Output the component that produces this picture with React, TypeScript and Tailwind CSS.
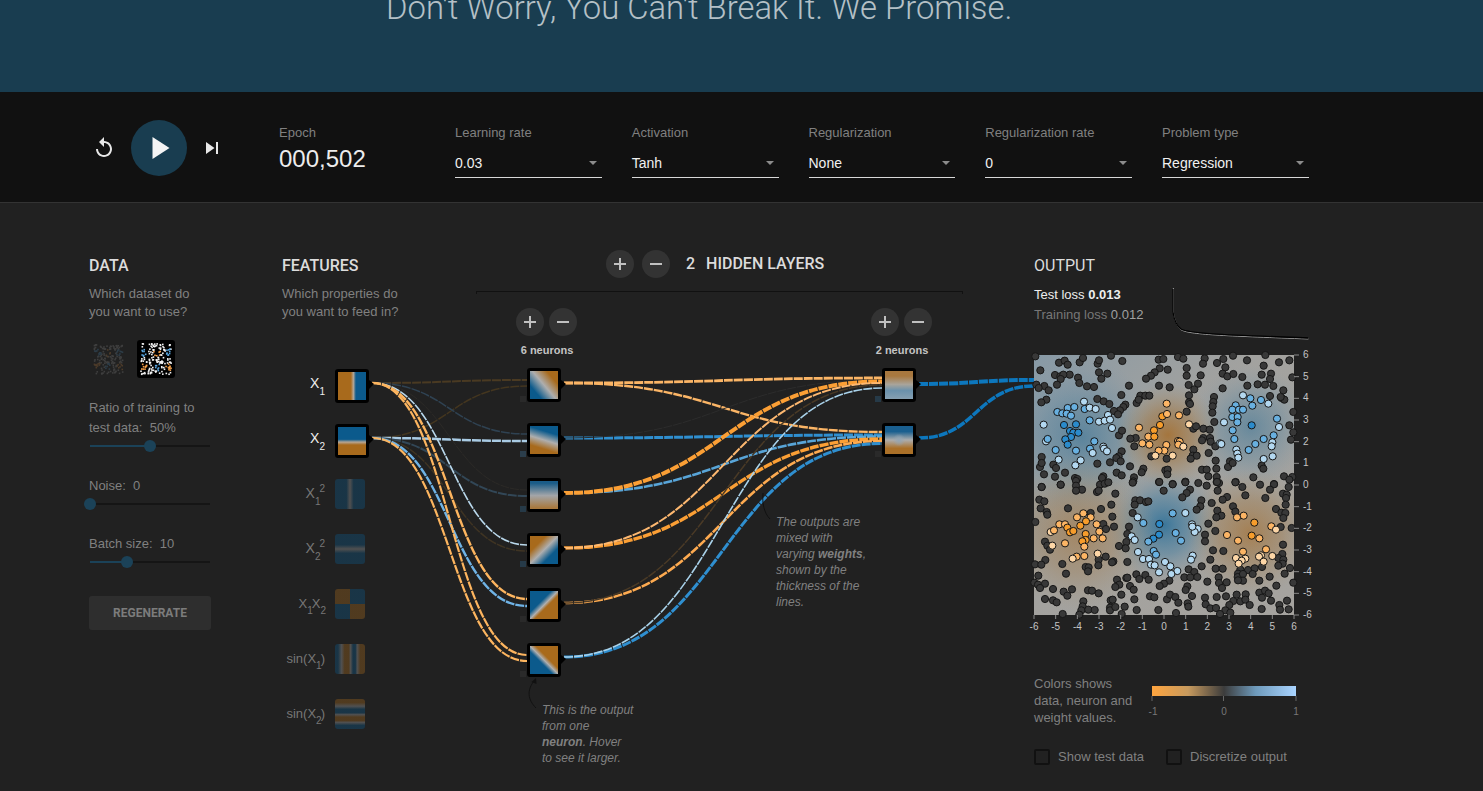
import React from "react";

const BLUE = "#2f8fd0";
const link = (x1: number, y1: number, x2: number, y2: number) => {
  const m = (x1 + x2) / 2;
  return `M${x1} ${y1}C${m} ${y1} ${m} ${y2} ${x2} ${y2}`;
};

type L = [number, number, number, number, string, number];
const X1 = 383, X2 = 438;
const LINKS: L[] = [
  [372, X1, 527, 380, "#4a3a22", 2],
  [372, X2, 527, 386, "#44361f", 1.5],
  [372, X1, 527, 434, "#2f4252", 1.5],
  [372, X2, 527, 441, "#a9cbe4", 2.5],
  [372, X1, 527, 490, "#2c2a27", 1],
  [372, X2, 527, 496, "#324757", 2],
  [372, X1, 527, 545, "#b9d8ec", 1.6],
  [372, X2, 527, 551, "#3f3423", 1.5],
  [372, X1, 527, 599, "#fdb55f", 2.4],
  [372, X2, 527, 606, "#6fb3e6", 2.4],
  [372, X1, 527, 655, "#fdb55f", 2.2],
  [372, X2, 527, 661, "#fdb55f", 2.2],
  [564, 383, 882, 432, "#fbb566", 2.4],
  [564, 438, 882, 435, BLUE, 3],
  [564, 493, 882, 436.5, "#58a5d8", 2.6],
  [564, 548, 882, 439, "#fb9f35", 3.4],
  [564, 603, 882, 441, "#fdaa50", 2.6],
  [564, 657, 882, 443.5, BLUE, 3],
  [564, 383, 882, 378, "#fbb566", 2.8],
  [564, 438, 882, 380, "#2c2c2c", 1],
  [564, 493, 882, 381.5, "#fb9f35", 4],
  [564, 548, 882, 383, "#fdb870", 2],
  [564, 603, 882, 385, "#4a3a26", 1.5],
  [564, 657, 882, 388, "#a9d2ea", 1.6],
  [919, 384, 1034, 380, "#0d77bd", 4],
  [919, 438, 1034, 386, "#0d77bd", 3.5],
];
const DIAMONDS: [number, number][] = [
  [369, 385], [369, 440], [561, 385], [561, 440], [561, 495], [561, 550], [561, 605], [561, 660], [916, 385], [916, 440],
];

function Network() {
  return (
    <svg className="absolute inset-0 pointer-events-none" width="1483" height="588" viewBox="0 203 1483 588" fill="none">
      {LINKS.map((l, i) => (
        <path key={i} d={link(l[0], l[1], l[2], l[3])} stroke={l[4]} strokeWidth={l[5]} strokeDasharray="9 1" />
      ))}
      {DIAMONDS.map(([x, y], i) => (
        <polygon key={i} points={`${x},${y - 5} ${x + 5},${y - 1} ${x},${y + 4}`} fill="#000" />
      ))}
      <path d="M536 708C528 700 526 690 535 680" stroke="#111" strokeWidth="1" />
      <path d="M531.5 682L536 678L536.5 684Z" fill="#111" />
      <path d="M770 519C764 513 762 503 763 493" stroke="#111" strokeWidth="1" />
      <path d="M476.5 291v3M962.5 291v3" stroke="#111" strokeWidth="1" />
    </svg>
  );
}

function HiddenNode({ bg, chip }: { bg: string; chip: string }) {
  return (
    <div className="relative w-[34px] h-[34px] ml-[11px] mb-[21px] rounded-[3px] border-[3px] border-black overflow-visible">
      <div className={"w-full h-full " + bg} />
      <div className={"absolute -left-[10px] top-[25px] w-[6px] h-[6px] " + chip} />
    </div>
  );
}

function RoundBtn({ minus }: { minus?: boolean }) {
  return (
    <button className="w-[28px] h-[28px] rounded-full bg-[#333333] flex items-center justify-center">
      <svg width="12" height="12" viewBox="0 0 12 12" fill="none" stroke="#c0c0c0" strokeWidth="2">
        <path d="M0 6H12" />
        {!minus && <path d="M6 0V12" />}
      </svg>
    </button>
  );
}

function Layer({ label, children }: { label: string; children: React.ReactNode }) {
  return (
    <div className="w-[62px] flex flex-col">
      <div className="flex gap-[5px]">
        <RoundBtn />
        <RoundBtn minus />
      </div>
      <div className="mt-[6px] mb-[10px] h-[16px] leading-[16px] text-center text-[11px] font-bold text-[#c4c4c4] whitespace-nowrap">{label}</div>
      {children}
    </div>
  );
}

function Select({ label, value }: { label: string; value: string }) {
  return (
    <div className="w-[146.75px] pt-[32px]">
      <div className="text-[13px] leading-[16px] text-[#808080]">{label}</div>
      <div className="mt-[14px] pb-[6px] border-b border-[#d8d8d8] flex items-center justify-between pr-[5px] h-[23px]">
        <span className="text-[14px] leading-[16px] text-[#f0f0f0]">{value}</span>
        <span className="w-0 h-0 border-l-[4px] border-r-[4px] border-t-[4px] border-l-transparent border-r-transparent border-t-[#8c8c8c]" />
      </div>
    </div>
  );
}

function Slider({ fill, thumb }: { fill: string; thumb: string }) {
  return (
    <div className="relative h-[2px] w-[120px] ml-[1px] bg-[#151515]">
      <div className={"h-full bg-[#1b4258] " + fill} />
      <div className={"absolute -top-[5px] w-[12px] h-[12px] rounded-full bg-[#1b4258] " + thumb} />
    </div>
  );
}

function rng(seed: number) {
  let s = seed;
  return () => {
    s = (s * 1664525 + 1013904223) % 4294967296;
    return s / 4294967296;
  };
}

function DatasetDots({ size, seed, white }: { size: number; seed: number; white: string }) {
  const r = rng(seed);
  const items: React.ReactNode[] = [];
  const s = size;
  for (let i = 0; i < 170; i++) {
    const x = 2 + r() * (s - 5);
    const y = 2 + r() * (s - 5);
    const col = Math.floor(x / (s / 3));
    const row = y < s / 2 ? 0 : 1;
    const cx = (col + 0.5) * (s / 3);
    const cy = row === 0 ? s * 0.3 : s * 0.7;
    const near = Math.hypot(x - cx, y - cy) < s * 0.11;
    const blue = (col + row) % 2 === 0;
    items.push(
      <rect key={i} x={x} y={y} width="1.6" height="1.6" fill={near ? (blue ? "#5aa7e0" : "#f5a04a") : white} />
    );
  }
  return (
    <svg width={s} height={s} viewBox={`0 0 ${s} ${s}`}>
      {items}
    </svg>
  );
}

/* Points measured off the plot: top half then bottom half */
const tp = (a: number[][]) => a.map(([x, y]) => [(x - 42) / 3, (y - 316) / 3]);
const bt = (a: number[][]) => a.map(([x, y]) => [(x - 42) / 3, (y + 374) / 3]);

const DARK = [
  ...tp([[46,320],[61,362],[117,339],[134,333],[143,345],[179,338],[189,325],[233,342],[237,332],[273,318],[307,334],[416,330],[430,328],[474,322],[490,327],[554,326],[549,342],[591,340],[610,328],[639,318],[681,332],[736,316],[777,338],[808,332],[731,348],[616,353],[500,355],[443,360],[419,356],[404,368],[393,378],[378,387],[237,368],[262,372],[105,376],[121,380],[149,375],[130,375],[174,384],[122,388],[111,405],[178,400],[201,410],[222,412],[327,408],[244,387],[417,408],[449,413],[500,378],[506,406],[542,377],[608,372],[622,380],[640,373],[667,382],[725,375],[753,372],[750,388],[713,404],[735,405],[682,408],[760,409],[817,383],[523,419],[534,402],[608,416],[49,405],[73,409],[86,422],[56,415],[79,450],[64,458],[232,448],[251,455],[268,463],[304,436],[316,465],[310,472],[300,482],[282,484],[294,494],[361,438],[376,438],[388,438],[350,460],[356,450],[507,437],[507,458],[510,463],[582,442],[580,457],[578,470],[577,489],[500,486],[583,517],[520,537],[528,530],[550,537],[569,540],[550,565],[546,572],[570,565],[572,576],[586,590],[566,610],[520,600],[518,618],[530,618],[512,627],[394,620],[440,627],[343,590],[347,565],[331,567],[297,557],[306,543],[305,605],[296,620],[289,625],[302,635],[270,638],[232,642],[330,650],[370,657],[365,668],[436,662],[443,660],[442,674],[546,660],[560,660],[587,633],[589,657],[565,680],[590,682],[630,635],[624,652],[638,640],[725,648],[730,657],[792,680],[817,682],[808,690],[700,683],[647,697],[762,703],[720,705],[65,622],[60,652],[65,640],[100,645],[108,655],[72,674],[105,681],[135,669],[165,685],[172,688],[122,705],[65,712],[250,680],[246,685],[290,669],[305,677],[342,683],[340,695],[417,697],[458,703],[496,696],[535,700],[590,697],[597,700],[790,422],[785,445],[793,450],[782,442],[808,527],[820,487],[820,548],[813,570],[750,439]]),
  ...bt([[65,22],[122,15],[168,4],[168,18],[186,30],[168,33],[240,15],[254,12],[265,8],[338,9],[418,7],[458,14],[496,8],[560,18],[591,7],[646,8],[667,22],[762,14],[750,30],[806,22],[231,37],[236,33],[286,42],[431,33],[510,30],[500,40],[487,53],[593,33],[621,52],[608,60],[676,47],[736,55],[789,42],[800,45],[798,55],[58,60],[73,65],[62,86],[80,97],[82,105],[144,86],[274,75],[243,88],[346,62],[360,62],[378,67],[385,65],[344,75],[544,62],[541,80],[530,90],[575,70],[639,80],[646,96],[592,93],[604,108],[589,113],[797,75],[768,88],[784,99],[796,100],[790,115],[212,100],[338,100],[46,127],[277,111],[565,132],[250,133],[258,148],[282,141],[327,141],[322,163],[319,187],[297,199],[317,206],[555,165],[555,185],[586,154],[815,145],[782,142],[75,186],[82,198],[90,210],[610,214],[579,212],[789,195],[787,223],[775,235],[790,240],[788,252],[775,258],[257,231],[236,240],[235,257],[280,245],[276,248],[322,247],[76,241],[45,254],[64,255],[127,253],[197,262],[206,263],[204,275],[571,240],[545,260],[506,269],[587,267],[608,267],[661,270],[684,271],[704,266],[726,262],[654,282],[653,292],[669,283],[698,283],[669,303],[654,302],[794,282],[810,265],[138,282],[55,288],[43,309],[54,315],[75,312],[60,325],[99,328],[131,336],[142,348],[156,329],[204,332],[216,333],[236,341],[291,300],[298,315],[286,322],[319,295],[322,294],[330,319],[341,330],[349,284],[358,298],[376,286],[386,300],[448,303],[432,312],[419,319],[523,277],[493,293],[511,293],[532,292],[596,293],[597,310],[562,306],[620,308],[606,325],[718,303],[749,291],[820,309],[769,318],[502,320],[497,331],[516,349],[555,354],[557,374],[590,352],[618,350],[640,364],[628,376],[661,365],[650,345],[677,344],[676,360],[689,376],[718,339],[735,333],[746,341],[726,354],[753,363],[778,376],[801,363],[780,390],[806,389],[75,358],[99,362],[110,368],[190,365],[188,380],[184,392],[205,390],[224,391],[272,362],[278,360],[270,384],[270,392],[286,382],[314,381],[304,345],[343,359],[350,391],[390,350],[403,353],[415,391],[441,359],[450,345],[466,352],[475,369],[503,371],[505,381],[468,400],[571,386],[588,385],[616,392],[600,403],[631,399],[725,388],[128,403],[178,405],[305,403]]),
];
const CLUSTERS: { pts: number[][]; c: [number, number]; pal: string[] }[] = [
  { c: [39, 78], pal: ["#2b8bcb", "#68b0e0", "#b3d8f0"], pts: tp([[112,487],[127,491],[143,475],[163,472],[140,492],[153,498],[192,456],[194,478],[209,474],[227,478],[264,496],[237,516],[254,513],[270,510],[276,535],[209,512],[132,526],[168,524],[150,544],[160,549],[175,549],[153,562],[136,569],[143,585],[71,525],[78,575],[83,568],[223,575],[107,601],[168,603],[210,597],[218,610],[250,591],[252,597],[261,605],[116,630],[182,632],[166,647]]) },
  { c: [217, 70], pal: ["#2b8bcb", "#68b0e0", "#b3d8f0"], pts: tp([[669,437],[691,446],[723,451],[745,462],[697,468],[647,467],[637,480],[657,480],[669,480],[637,502],[653,502],[652,518],[612,518],[695,527],[771,507],[777,532],[638,542],[761,557],[643,568],[600,581],[604,583],[731,568],[706,583],[686,601],[757,578],[755,590],[649,600],[652,612],[655,624],[758,620],[731,628]]) },
  { c: [125, 72], pal: ["#f79d2c", "#fcb565", "#fdd6a6"], pts: tp([[440,462],[427,500],[441,493],[477,497],[357,534],[420,526],[402,542],[507,524],[385,561],[403,561],[367,581],[388,585],[439,586],[474,574],[479,576],[475,585],[490,591],[433,603],[416,603],[406,618],[458,618]]) },
  { c: [46, 175], pal: ["#f79d2c", "#fcb565", "#fdd6a6"], pts: bt([[190,101],[171,113],[212,113],[198,125],[181,138],[118,134],[135,134],[142,144],[150,158],[160,154],[92,157],[102,152],[230,134],[238,156],[197,163],[197,181],[221,176],[248,176],[187,185],[135,191],[97,198],[193,201],[233,222],[193,229],[170,231],[158,237]]) },
  { c: [128, 180], pal: ["#2b8bcb", "#68b0e0", "#b3d8f0"], pts: bt([[458,101],[496,100],[353,113],[370,130],[418,133],[516,134],[533,148],[524,157],[517,141],[335,170],[344,181],[417,165],[400,177],[385,186],[467,160],[483,183],[354,217],[401,214],[408,225],[518,228],[513,240],[369,238],[387,238],[393,255],[404,257],[435,247],[451,260],[472,274],[454,283],[417,278]]) },
  { c: [214, 176], pal: ["#f79d2c", "#fcb565", "#fdd6a6"], pts: bt([[671,108],[651,113],[703,129],[754,140],[768,150],[621,166],[695,168],[718,176],[654,183],[738,209],[669,216],[723,227],[717,231],[757,229],[648,235],[676,237],[665,243],[656,252],[731,246]]) },
];

const HEAT: [string, number, number, number, number][] = [
  ["b", 48, 82, 78, 0.62], ["b", 217, 72, 62, 0.55], ["b", 130, 170, 58, 0.95],
  ["o", 134, 80, 52, 0.9], ["o", 44, 178, 78, 0.55], ["o", 216, 178, 64, 0.7],
];

function Plot() {
  const ticks = [-6, -5, -4, -3, -2, -1, 0, 1, 2, 3, 4, 5, 6];
  return (
    <svg width="260" height="260" viewBox="0 0 260 260" className="block overflow-visible">
      <defs>
        <radialGradient id="hb">
          <stop offset="0" stopColor="#2f7199" stopOpacity="0.95" />
          <stop offset="0.5" stopColor="#4f83a3" stopOpacity="0.6" />
          <stop offset="1" stopColor="#7a98ad" stopOpacity="0" />
        </radialGradient>
        <radialGradient id="ho">
          <stop offset="0" stopColor="#a56e2d" stopOpacity="0.95" />
          <stop offset="0.5" stopColor="#a27a48" stopOpacity="0.6" />
          <stop offset="1" stopColor="#a8916f" stopOpacity="0" />
        </radialGradient>
        <linearGradient id="hb2" x1="0" y1="0" x2="1" y2="1">
          <stop offset="0" stopColor="#7f97a8" stopOpacity="0.8" />
          <stop offset="0.45" stopColor="#8f9aa0" stopOpacity="0.1" />
          <stop offset="1" stopColor="#a09a90" stopOpacity="0" />
        </linearGradient>
        <clipPath id="pc"><rect width="260" height="260" /></clipPath>
      </defs>
      <g clipPath="url(#pc)">
        <rect width="260" height="260" fill="#a5a39f" />
        <rect width="260" height="260" fill="url(#hb2)" />
        {HEAT.map(([k, x, y, r, o], i) => (
          <circle key={i} cx={x} cy={y} r={r} fill={k === "b" ? "url(#hb)" : "url(#ho)"} opacity={o} />
        ))}
      </g>
      {DARK.map(([x, y], i) => (
        <circle key={i} cx={x} cy={y} r="3.6" fill="#383838" stroke="#171717" strokeWidth="1" />
      ))}
      {CLUSTERS.flatMap((cl, j) =>
        cl.pts.map(([x, y], i) => {
          const d = Math.hypot(x - cl.c[0], y - cl.c[1]);
          const fill = d < 13 ? cl.pal[0] : d < 27 ? cl.pal[1] : cl.pal[2];
          return <circle key={j + "-" + i} cx={x} cy={y} r="3.6" fill={fill} stroke="#171717" strokeWidth="1" />;
        })
      )}
      <g stroke="#8a8a8a" strokeWidth="1">
        {ticks.map((t) => (
          <g key={t}>
            <path d={`M${(t + 6) * (260 / 12)} 260v4`} />
            <path d={`M260 ${(6 - t) * (260 / 12)}h5`} />
          </g>
        ))}
      </g>
      <g fontSize="10" fill="#c4c4c4" fontFamily="'Liberation Sans',sans-serif">
        {ticks.map((t) => (
          <text key={t} x={(t + 6) * (260 / 12)} y="275" textAnchor="middle">{t}</text>
        ))}
        {ticks.map((t) => (
          <text key={t} x="269" y={(6 - t) * (260 / 12) + 3}>{t}</text>
        ))}
      </g>
    </svg>
  );
}

function FeatureRow({ children, thumb }: { children: React.ReactNode; thumb: React.ReactNode }) {
  return (
    <div className="flex h-[55px] items-start">
      <div className="w-[43px] h-[30px] flex items-center justify-end whitespace-nowrap text-[14px] leading-none">{children}</div>
      <div className="ml-[10px]">{thumb}</div>
    </div>
  );
}

const Sub = ({ n }: { n: string }) => <sub className="text-[10px] top-[7px]">{n}</sub>;
const SubTight = ({ n }: { n: string }) => <sub className="text-[10px] top-[6px] mr-[-1px]">{n}</sub>;
const Sup = () => <sup className="text-[10px] -top-[6px] ml-[-1px]">2</sup>;

const inactive = "w-[30px] h-[30px] rounded-[3px] opacity-[0.35] ";
const active = "w-[34px] h-[34px] rounded-[3px] border-[3px] border-black ";

export default function App() {
  return (
    <div className="h-[791px] overflow-hidden bg-[#212121] font-['Liberation_Sans',Arial,sans-serif]">
      <header className="h-[92px] bg-[#193d50] overflow-hidden">
        <h1 className="ml-[386px] -mt-[11px] font-['Roboto',sans-serif] font-light text-[32.8px] leading-[38px] text-[#b4c0c6] whitespace-nowrap">
          Don't Worry, You Can't Break It. We Promise.
        </h1>
      </header>

      <section className="h-[111px] pt-[1px] bg-[#111111] border-b border-[#333333] flex pl-[92px]">
        <div className="flex items-center h-full">
          <svg width="24" height="24" viewBox="0 0 24 24" fill="#e8e8e8">
            <path d="M12 5V1L7 6l5 5V7c3.31 0 6 2.69 6 6s-2.69 6-6 6-6-2.69-6-6H4c0 4.42 3.58 8 8 8s8-3.58 8-8-3.58-8-8-8z" />
          </svg>
          <button className="ml-[15px] w-[56px] h-[56px] rounded-full bg-[#193d50] flex items-center justify-center">
            <svg width="18" height="22" viewBox="0 0 18 22" fill="#f4f4f4" className="ml-[4px]">
              <path d="M0.5 0L17.5 11L0.5 22Z" />
            </svg>
          </button>
          <svg width="24" height="24" viewBox="0 0 24 24" fill="#e8e8e8" className="ml-[13px]">
            <path d="M6 18l8.5-6L6 6v12zM16 6v12h2V6h-2z" />
          </svg>
        </div>
        <div className="ml-[55px] w-[176px] pt-[32px]">
          <div className="text-[13px] leading-[16px] text-[#808080]">Epoch</div>
          <div className="mt-[4px] text-[24px] leading-[28px] text-[#ececec]">000,502</div>
        </div>
        <div className="flex gap-[30px]">
          <Select label="Learning rate" value="0.03" />
          <Select label="Activation" value="Tanh" />
          <Select label="Regularization" value="None" />
          <Select label="Regularization rate" value="0" />
          <Select label="Problem type" value="Regression" />
        </div>
      </section>

      <main className="relative flex pl-[89px] h-[588px]">
        <Network />

        {/* DATA */}
        <div className="w-[193px] pt-[53px] text-[13px] text-[#808080]">
          <h4 className="font-['Roboto',sans-serif] font-medium text-[16px] leading-[20px] text-[#dcdcdc]">DATA</h4>
          <p className="mt-[9px] leading-[18px]">Which dataset do<br />you want to use?</p>
          <div className="mt-[19px] flex items-center gap-[12px] ml-[2px]">
            <div className="w-[34px] h-[34px] opacity-20">
              <DatasetDots size={34} seed={11} white="#b0b0b0" />
            </div>
            <div className="w-[38px] h-[38px] bg-black rounded-[3px] p-[1px]">
              <DatasetDots size={36} seed={29} white="#f2f2f2" />
            </div>
          </div>
          <div className="mt-[20px] leading-[20px]">Ratio of training to<br />test data:&nbsp; 50%</div>
          <div className="mt-[7px]"><Slider fill="w-[50%]" thumb="left-[54px]" /></div>
          <div className="mt-[29px] leading-[20px]">Noise:&nbsp; 0</div>
          <div className="mt-[7px]"><Slider fill="w-0" thumb="-left-[6px]" /></div>
          <div className="mt-[29px] leading-[20px]">Batch size:&nbsp; 10</div>
          <div className="mt-[7px]"><Slider fill="w-[31%]" thumb="left-[31px]" /></div>
          <button className="mt-[33px] w-[122px] h-[34px] rounded-[3px] bg-[#2e2e2e] font-['Roboto',sans-serif] font-bold text-[12px] text-[#7c7c7c]">
            REGENERATE
          </button>
        </div>

        {/* FEATURES */}
        <div className="w-[194px] pt-[53px] text-[13px] text-[#808080]">
          <h4 className="font-['Roboto',sans-serif] font-medium text-[16px] leading-[20px] text-[#dcdcdc]">FEATURES</h4>
          <p className="mt-[9px] leading-[18px]">Which properties do<br />you want to feed in?</p>
          <div className="mt-[48px]">
            <FeatureRow thumb={<div className={active + "bg-[linear-gradient(90deg,#a86a1c_46%,#b5a695_55%,#0b5a8c_64%)]"} />}>
              <span className="text-[#eeeeee] -mt-[2px]">X<Sub n="1" /></span>
            </FeatureRow>
            <FeatureRow thumb={<div className={active + "bg-[linear-gradient(180deg,#0b5a8c_44%,#b5a695_54%,#a86a1c_64%)]"} />}>
              <span className="text-[#eeeeee] -mt-[2px]">X<Sub n="2" /></span>
            </FeatureRow>
            <FeatureRow thumb={<div className={inactive + "bg-[linear-gradient(90deg,#0b5a8c_38%,#a8a8a8_50%,#0b5a8c_62%)]"} />}>
              <span className="text-[#777777] -mt-[2px]">X<Sub n="1" /><Sup /></span>
            </FeatureRow>
            <FeatureRow thumb={<div className={inactive + "bg-[linear-gradient(180deg,#0b5a8c_36%,#a8a8a8_50%,#0b5a8c_64%)]"} />}>
              <span className="text-[#777777] -mt-[2px]">X<Sub n="2" /><Sup /></span>
            </FeatureRow>
            <FeatureRow thumb={<div className={inactive + "bg-[conic-gradient(#0b5a8c_0_25%,#a86a1c_25%_50%,#0b5a8c_50%_75%,#a86a1c_75%_100%)]"} />}>
              <span className="text-[#777777] text-[13px] -mt-[2px]">X<SubTight n="1" />X<SubTight n="2" /></span>
            </FeatureRow>
            <FeatureRow thumb={<div className={inactive + "bg-[linear-gradient(90deg,#0b5a8c_10%,#a8a8a8_22%,#a86a1c_32%_46%,#a8a8a8_52%,#0b5a8c_60%_68%,#a8a8a8_74%,#a86a1c_84%_100%)]"} />}>
              <span className="text-[#777777] text-[13px] -mt-[2px]">sin(X<SubTight n="1" />)</span>
            </FeatureRow>
            <FeatureRow thumb={<div className={inactive + "bg-[linear-gradient(180deg,#a86a1c_12%,#a8a8a8_24%,#0b5a8c_34%_46%,#a8a8a8_52%,#a86a1c_60%_72%,#a8a8a8_78%,#0b5a8c_88%_100%)]"} />}>
              <span className="text-[#777777] text-[13px] -mt-[2px]">sin(X<SubTight n="2" />)</span>
            </FeatureRow>
          </div>
        </div>

        {/* NETWORK */}
        <div className="relative w-[487px] pt-[46px]">
          <div className="h-[43px] pl-[130px] flex items-start border-b border-[#111111]">
            <div className="flex gap-[8px] mt-[1px]">
              <RoundBtn />
              <RoundBtn minus />
            </div>
            <div className="h-[28px] flex items-center font-['Roboto',sans-serif] font-medium text-[#dcdcdc] text-[16px] mt-[1px]">
              <span className="ml-[16px]">2</span>
              <span className="ml-[11px]">HIDDEN LAYERS</span>
            </div>
          </div>
          <div className="pt-[16px] pl-[40px] flex gap-[293px]">
            <Layer label="6 neurons">
              <HiddenNode chip="bg-[#2a2a2a]" bg="bg-[linear-gradient(50deg,#0b5a8c_22%,#aeaeae_50%,#a86a1c_78%)]" />
              <HiddenNode chip="bg-[#2b3e4c]" bg="bg-[linear-gradient(197deg,#0b5a8c_25%,#aeaeae_50%,#a86a1c_75%)]" />
              <HiddenNode chip="bg-[#263a48]" bg="bg-[linear-gradient(180deg,#1a5c88_8%,#a3a5a8_52%,#a9793e_96%)]" />
              <HiddenNode chip="bg-[#263a48]" bg="bg-[linear-gradient(135deg,#a86a1c_28%,#aeaeae_50%,#0b5a8c_72%)]" />
              <HiddenNode chip="bg-[#2a2a2a]" bg="bg-[linear-gradient(135deg,#0b5a8c_38%,#aeaeae_50%,#a86a1c_58%)]" />
              <HiddenNode chip="bg-[#2a2a2a]" bg="bg-[linear-gradient(45deg,#0b5a8c_40%,#aeaeae_50%,#a86a1c_60%)]" />
            </Layer>
            <Layer label="2 neurons">
              <HiddenNode chip="bg-[#263a48]" bg="bg-[linear-gradient(180deg,#a8783f_18%,#a9a49a_48%,#6a91ac_70%,#86a0b2_100%)]" />
              <HiddenNode chip="bg-[#2a2a2a]" bg="bg-[radial-gradient(circle_at_50%_50%,#94a6b4_0%,transparent_32%),linear-gradient(180deg,#1a5f8f_20%,#adadad_50%,#aa7028_80%)]" />
            </Layer>
          </div>
          <p className="absolute left-[66px] top-[499px] w-[110px] text-[12px] leading-[16px] italic text-[#808080]">
            This is the output<br />from one<br /><b>neuron</b>. Hover<br />to see it larger.
          </p>
          <p className="absolute left-[300px] top-[311px] w-[100px] text-[12px] leading-[16px] italic text-[#808080]">
            The outputs are<br />mixed with<br />varying <b>weights</b>,<br />shown by the<br />thickness of the<br />lines.
          </p>
        </div>

        {/* OUTPUT */}
        <div className="relative ml-[71px] w-[274px] pt-[53px]">
          <h4 className="font-['Roboto',sans-serif] text-[16px] leading-[20px] text-[#dcdcdc]">OUTPUT</h4>
          <div className="mt-[9px] text-[13px] leading-[20px]">
            <div className="text-[#eeeeee]">Test loss <span className="font-bold">0.013</span></div>
            <div className="text-[#777777]">Training loss <span className="text-[#a0a0a0]">0.012</span></div>
          </div>
          <svg className="absolute left-[138px] top-[82px]" width="137" height="56" viewBox="0 0 137 56" fill="none">
            <path d="M1 2V27C2 34 5 41 9 44C18 49 60 50 136 53" stroke="#a0a0a0" strokeWidth="1" transform="translate(0.4 1)" />
            <path d="M1 4V27C2 34 5 41 9 44C18 49 60 50 136 53" stroke="#000" strokeWidth="1.3" />
          </svg>
          <div className="mt-[30px]"><Plot /></div>
          <div className="mt-[60px] flex">
            <div className="w-[118px] text-[13px] leading-[17px] text-[#808080]">Colors shows<br />data, neuron and<br />weight values.</div>
            <svg width="150" height="40" viewBox="0 0 150 40" className="mt-[11px] -ml-[1px] overflow-visible">
              <defs>
                <linearGradient id="lg">
                  <stop offset="0" stopColor="#ffa53f" />
                  <stop offset="0.25" stopColor="#c79a5e" />
                  <stop offset="0.5" stopColor="#3c3c3c" />
                  <stop offset="0.72" stopColor="#6e9abb" />
                  <stop offset="1" stopColor="#a9d4ff" />
                </linearGradient>
              </defs>
              <rect x="1" y="0" width="144" height="10" fill="url(#lg)" />
              <path d="M1 10v5M72.5 10v5M145 10v5" stroke="#666" />
              <g fontSize="10" fill="#777777" textAnchor="middle" fontFamily="'Liberation Sans',sans-serif">
                <text x="2" y="29">-1</text>
                <text x="73" y="29">0</text>
                <text x="145" y="29">1</text>
              </g>
            </svg>
          </div>
          <div className="mt-[21px] flex text-[13px] text-[#808080]">
            <label className="flex items-center w-[132px]">
              <span className="w-[16px] h-[16px] rounded-[2px] border-2 border-[#111111]" />
              <span className="ml-[8px]">Show test data</span>
            </label>
            <label className="flex items-center">
              <span className="w-[16px] h-[16px] rounded-[2px] border-2 border-[#111111]" />
              <span className="ml-[8px]">Discretize output</span>
            </label>
          </div>
        </div>
      </main>
    </div>
  );
}
